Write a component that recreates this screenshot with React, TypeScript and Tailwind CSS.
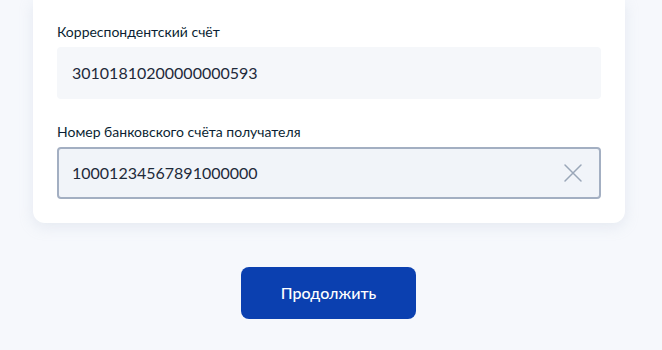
import React from "react";

export default function App() {
  return (
    <div className="w-[662px] h-[350px] bg-[#f6f8fc] overflow-hidden" style={{ fontFamily: "Lato, 'Noto Sans', sans-serif" }}>
      <div className="ml-[33px] w-[592px] bg-white rounded-b-[12px] shadow-[0_4px_14px_rgba(180,190,210,0.25)] px-6 pt-[22px] pb-6 flex flex-col">
        <label className="text-[14px] leading-5 text-[#0b1f33]">Корреспондентский счёт</label>
        <div className="mt-[5px] h-[52px] rounded-[4px] bg-[#f5f7fa] flex items-center px-[15px] text-[16px] text-[#1e2a3a]">
          30101810200000000593
        </div>
        <label className="mt-[23px] text-[14px] leading-5 text-[#0b1f33]">Номер банковского счёта получателя</label>
        <div className="mt-[5px] h-[52px] rounded-[4px] bg-[#f1f4f9] border-2 border-[#a3afc2] flex items-center pl-[13px] pr-[16px] text-[16px] text-[#1e2a3a]">
          <span className="flex-1">10001234567891000000</span>
          <svg width="20" height="20" viewBox="0 0 20 20" fill="none" stroke="#9aa6b8" strokeWidth="1.5" strokeLinecap="round">
            <path d="M2 2 L18 18 M18 2 L2 18" />
          </svg>
        </div>
      </div>
      <div className="flex justify-center mt-[44px] pr-[5px]">
        <button className="w-[175px] h-[52px] rounded-[8px] bg-[#0b40b0] text-white text-[16px] font-medium">
          Продолжить
        </button>
      </div>
    </div>
  );
}
